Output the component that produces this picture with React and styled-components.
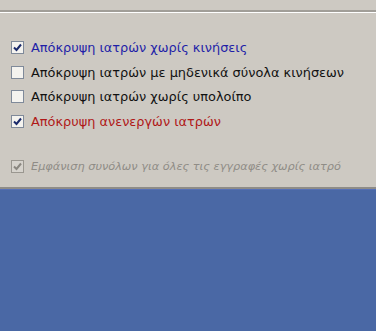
import React from "react";
import styled, { createGlobalStyle } from "styled-components";

const Global = createGlobalStyle`
	html, body {
		margin: 0;
		padding: 0;
		background: #4a68a5;
	}
`;

const Page = styled.div`
	width: 376px;
	height: 331px;
	display: flex;
	flex-direction: column;
	font-family: "DejaVu Sans", Verdana, sans-serif;
`;

const TopStrip = styled.div`
	height: 10px;
	background: #cdc9c2;
	border-bottom: 2px solid #a19e98;
	box-shadow: 0 1px 0 #ffffff;
`;

const Panel = styled.div`
	flex: 0 0 176px;
	margin-top: 1px;
	background: #cdc9c2;
	display: flex;
	flex-direction: column;
	padding: 22px 0 0 11px;
	box-sizing: border-box;
	border-bottom: 2px solid #8e8c88;
`;

const Row = styled.label`
	display: flex;
	align-items: center;
	height: 24.7px;
	gap: 7px;
	font-size: ${(p) => (p.disabled ? "11.3px" : "12.9px")};
	color: ${(p) => p.color || "#111111"};
	font-style: ${(p) => (p.disabled ? "italic" : "normal")};
	white-space: nowrap;
`;

const Box = styled.span`
	width: 11px;
	height: 11px;
	border: 1px solid ${(p) => (p.disabled ? "#9a9790" : "#7f8a9a")};
	background: ${(p) => (p.disabled ? "#d6d3cd" : "#f4f3ef")};
	display: flex;
	align-items: center;
	justify-content: center;
	flex-shrink: 0;
`;

const Spacer = styled.div`
	height: ${(p) => p.h}px;
`;

const Blue = styled.div`
	flex: 1;
	background: #4a68a5;
	border-top: 1px solid #5570b8;
`;

const Check = ({ color }) => (
	<svg width="9" height="9" viewBox="0 0 9 9">
		<path d="M1 4.5 L3.5 7 L8 1.5" fill="none" stroke={color} strokeWidth="2" />
	</svg>
);

const Option = ({ checked, color, disabled, children }) => (
	<Row color={color} disabled={disabled}>
		<Box disabled={disabled}>
			{checked && <Check color={disabled ? "#8a8780" : "#1a2a6a"} />}
		</Box>
		{children}
	</Row>
);

const App = () => (
	<Page>
		<Global />
		<TopStrip />
		<Panel>
			<Option checked color="#1f1fa8">Απόκρυψη ιατρών χωρίς κινήσεις</Option>
			<Option>Απόκρυψη ιατρών με μηδενικά σύνολα κινήσεων</Option>
			<Option>Απόκρυψη ιατρών χωρίς υπολοίπο</Option>
			<Option checked color="#b01818">Απόκρυψη ανενεργών ιατρών</Option>
			<Spacer h={20} />
			<Option checked disabled color="#8f8c86">
				Εμφάνιση συνόλων για όλες τις εγγραφές χωρίς ιατρό
			</Option>
		</Panel>
		<Blue />
	</Page>
);

export default App;
